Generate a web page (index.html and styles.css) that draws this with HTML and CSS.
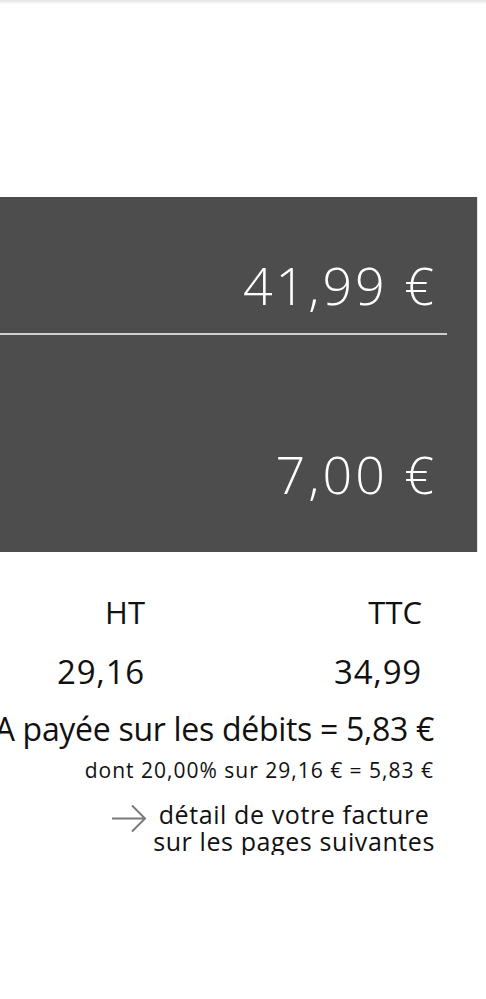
FILE: index.html
```html
<!DOCTYPE html>
<html lang="fr">
<head>
  <meta charset="UTF-8" />
  <meta name="viewport" content="width=device-width, initial-scale=1.0" />
  <title>Facture - récapitulatif</title>
  <link rel="stylesheet" href="styles.css">
</head>
<body>
  <div class="topbar"></div>

  <div class="totals">
    <div class="total-row first">
      <span class="amount">41,99 €</span>
    </div>
    <div class="total-row second">
      <span class="amount">7,00 €</span>
    </div>
  </div>

  <div class="tax">
    <div class="tax-cols">
      <div class="col col-ht">
        <span class="head">HT</span>
        <span class="val">29,16</span>
      </div>
      <div class="col col-ttc">
        <span class="head">TTC</span>
        <span class="val">34,99</span>
      </div>
    </div>
    <div class="tva"><span>TVA payée sur les débits = 5,83 €</span></div>
    <p class="tva-detail">dont 20,00% sur 29,16 € = 5,83 €</p>
  </div>

  <div class="more">
    <svg class="arrow" width="36" height="29" viewBox="0 0 36 29">
      <path d="M1 14.5 H34 M21 1.5 L34 14.5 L21 27.5" fill="none" stroke="#7a7a7a" stroke-width="2" />
    </svg>
    <p class="more-text">détail de votre facture<br>sur les pages suivantes</p>
  </div>
</body>
</html>
```

FILE: styles.css
```css
* {
  box-sizing: border-box;
}
body {
  margin: 0;
  background: #fff;
  color: #111;
  font-family: "Open Sans", Lato, sans-serif;
  overflow: hidden;
}
.topbar {
  height: 4px;
  background: linear-gradient(#e4e4e4, #fbfbfb);
  margin-bottom: 193px;
}
.totals {
  width: 477px;
  height: 355px;
  background: #4d4d4d;
  color: #fff;
  box-shadow: 1px 0 0 #e2e2e2;
}
.total-row {
  display: flex;
  justify-content: flex-end;
}
.total-row.first {
  height: 138px;
  padding: 58px 10px 0 0;
  margin-right: 30px;
  border-bottom: 2px solid #cfcfcf;
}
.total-row.second {
  padding: 109px 40px 0 0;
}
.amount {
  font-size: 52px;
  font-weight: 300;
  line-height: 60px;
  letter-spacing: 3px;
}
.tax {
  padding-top: 42px;
  padding-right: 52px;
}
.tax-cols {
  display: flex;
}
.col {
  display: flex;
  flex-direction: column;
  align-items: flex-end;
  gap: 24px;
  line-height: 36px;
}
.col-ht {
  width: 145px;
}
.col-ttc {
  width: 277px;
}
.head {
  font-size: 31px;
}
.val {
  font-size: 33px;
  letter-spacing: 0.8px;
}
.tva {
  display: flex;
  justify-content: flex-end;
  margin-top: 20px;
  font-size: 32px;
  line-height: 38px;
  letter-spacing: -0.3px;
  white-space: nowrap;
}
.tva-detail {
  margin: 10px 0 0;
  font-size: 21px;
  line-height: 24px;
  letter-spacing: 1px;
  text-align: right;
}
.more {
  display: flex;
  justify-content: flex-end;
  align-items: flex-start;
  gap: 6px;
  padding: 19px 51px 0 0;
}
.arrow {
  margin-top: 3px;
}
.more-text {
  margin: 0;
  font-size: 25px;
  line-height: 27px;
  letter-spacing: 0.6px;
  text-align: center;
}
```
